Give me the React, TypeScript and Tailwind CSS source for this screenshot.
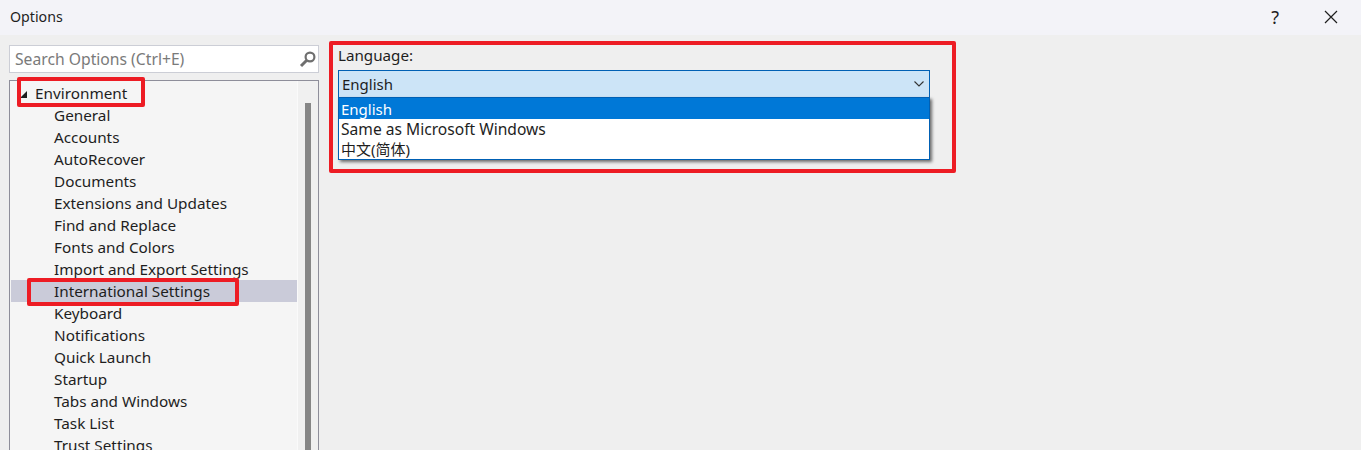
const ITEMS = [
  'General',
  'Accounts',
  'AutoRecover',
  'Documents',
  'Extensions and Updates',
  'Find and Replace',
  'Fonts and Colors',
  'Import and Export Settings',
  'International Settings',
  'Keyboard',
  'Notifications',
  'Quick Launch',
  'Startup',
  'Tabs and Windows',
  'Task List',
  'Trust Settings',
]

const FONT = "font-['Noto_Sans','Noto_Sans_CJK_SC',sans-serif]"

function Mark({ className }: { className: string }) {
  return <div className={`absolute border-[4px] border-[#ed1c24] rounded-[2px] pointer-events-none ${className}`} />
}

export default function App() {
  return (
    <div className={`relative h-[450px] w-[1361px] overflow-hidden bg-[#efefef] text-[15px] text-[#1e1e1e] ${FONT}`}>
      <div className="flex h-[35px] items-center justify-between bg-[#f3f3f8] pb-[2px] pl-[10px] pr-[23px]">
        <span className="text-[14.2px]">Options</span>
        <div className="flex items-center gap-[45px]">
          <span className="text-[18px] leading-none">?</span>
          <svg width="14" height="14" viewBox="0 0 14 14" stroke="#1e1e1e" strokeWidth="1.2" fill="none">
            <path d="M1 1l12 12M13 1L1 13" />
          </svg>
        </div>
      </div>

      <div className="flex">
        <div className="ml-[9px] mt-[10px] w-[310px]">
          <div className="flex h-[28px] items-center justify-between border border-[#ccced6] bg-white pl-[5px] pr-[2px]">
            <span className="pt-[2px] text-[15.7px] text-[#7a7a7a]">Search Options (Ctrl+E)</span>
            <svg width="17" height="17" viewBox="0 0 17 17" fill="none" stroke="#6f6f6f">
              <circle cx="11" cy="6" r="4.4" strokeWidth="2.2" />
              <path d="M7.5 9.5L2 15" strokeWidth="3" />
            </svg>
          </div>
          <div className="mt-[7px] flex h-[400px] border border-[#8e8e9a] bg-[#f5f5f5]">
            <div className="w-[287px] pl-[1px] pt-[1px] text-[15.3px]">
              <div className="flex h-[22px] items-center pl-[9px]">
                <span className="mt-[3px] h-0 w-0 border-b-[7px] border-l-[7px] border-b-[#1e1e1e] border-l-transparent" />
                <span className="ml-[8px]">Environment</span>
              </div>
              {ITEMS.map((item) => (
                <div
                  key={item}
                  className={`flex h-[22px] items-center pl-[43px] ${item === 'International Settings' ? 'bg-[#cacbd9]' : ''}`}
                >
                  {item}
                </div>
              ))}
            </div>
            <div className="flex-1 border-l border-[#fafafa] bg-[#f0f0f0] pl-[7px] pt-[22px]">
              <div className="h-full w-[6px] bg-[#868686]" />
            </div>
          </div>
        </div>

        <div className="ml-[19px] mt-[10px] w-[592px]">
          <div className="flex h-[25px] items-center pb-[4px] text-[15.2px]">Language:</div>
          <div className="flex h-[28px] items-center justify-between border border-[#0060b4] bg-[#cce4f7] pl-[3px] pr-[5px]">
            <span>English</span>
            <svg width="10" height="6" viewBox="0 0 10 6" fill="none" stroke="#333" strokeWidth="1.1">
              <path d="M0.5 0.5L5 5l4.5-4.5" />
            </svg>
          </div>
          <div className="-mt-px border border-[#0060b4] bg-white shadow-[2px_2px_3px_rgba(0,0,0,0.55)]">
            <div className="flex h-[21px] items-center bg-[#0078d7] pl-[2px] pt-[1px] text-white">English</div>
            <div className="flex h-[20px] items-center pl-[2px] pt-[2px] text-[15.6px]">Same as Microsoft Windows</div>
            <div className="flex h-[20px] items-center pl-[2px]">中文(简体)</div>
          </div>
        </div>
      </div>

      <Mark className="left-[329px] top-[41px] h-[132px] w-[627px]" />
      <Mark className="left-[17px] top-[77px] h-[30px] w-[128px]" />
      <Mark className="left-[27px] top-[278px] h-[28px] w-[212px]" />
    </div>
  )
}
